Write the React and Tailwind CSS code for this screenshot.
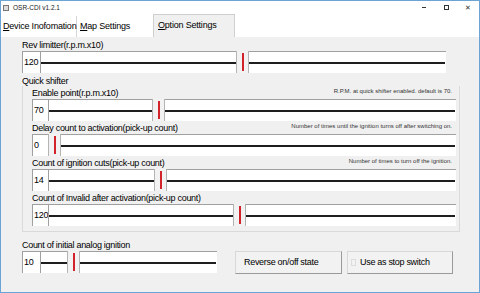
import React from 'react';

const font = { fontFamily: '"Liberation Sans", Arial, sans-serif' };

const Slider = ({ value, numW, offset, width }) => (
  <div className={`flex h-[22px] ${width}`}>
    <div
      className={`${numW} shrink-0 bg-white border-t border-l border-[#a0a0a0] flex items-center pl-[1px] text-[9px] tracking-[-0.3px] text-black whitespace-nowrap overflow-hidden`}
    >
      {value}
    </div>
    <div className="relative flex-1 bg-white border-t border-l border-[#a0a0a0] flex items-center">
      <div className="h-[2px] w-full mr-[1px] bg-[#1e1e1e]" />
      <div
        className="absolute top-[-1px] bottom-0 w-[13px] bg-[#f2f2f2] border-l border-r border-[#b4b4b4] flex justify-center items-center"
        style={{ left: offset }}
      >
        <div className="w-[2px] h-[18px] bg-[#d2232a]" />
      </div>
    </div>
  </div>
);

const Label = ({ children, note }) => (
  <div className="flex h-[13px] items-start justify-between pr-[4px] whitespace-nowrap">
    <span className="text-[9px] tracking-[-0.3px] leading-[13px] pt-[1px] text-black">{children}</span>
    {note && <span className="text-[6px] leading-[10px] text-[#333]">{note}</span>}
  </div>
);

const btn =
  'h-[23px] bg-[#f2f2f2] border-t border-l border-[#d8d8d8] border-r border-b border-r-[#9a9a9a] border-b-[#9a9a9a] text-[9px] tracking-[-0.3px] text-left text-black whitespace-nowrap flex items-center';

const App = () => {
  return (
    <div
      className="w-[480px] h-[293px] bg-white border border-[#6aa5d5] flex flex-col overflow-hidden"
      style={font}
    >
      {/* title bar */}
      <div className="h-[13px] flex items-center shrink-0">
        <div className="ml-[2px] w-[6px] h-[6px] border border-[#777] bg-[#ddd]" />
        <span className="ml-[4px] text-[6.5px] text-[#222]">OSR-CDI v1.2.1</span>
        <div className="ml-auto flex items-center h-full">
          <div className="w-[22px] flex justify-center">
            <div className="w-[4px] h-px bg-[#333]" />
          </div>
          <div className="w-[22px] flex justify-center">
            <div className="w-[5px] h-[5px] border border-[#333]" />
          </div>
          <div className="w-[22px] flex justify-center text-[7px] leading-none text-[#333]">✕</div>
        </div>
      </div>

      {/* tabs */}
      <div className="h-[23px] flex items-stretch shrink-0 text-[9px] tracking-[-0.2px] text-black whitespace-nowrap">
        <div className="flex items-center pl-[2px] w-[76px] mt-[2px] border-r border-[#d5d5d5]">
          <span>
            <u>D</u>evice Inofomation
          </span>
        </div>
        <div className="flex items-center pl-[3px] w-[76px] mt-[2px]">
          <span>
            <u>M</u>ap Settings
          </span>
        </div>
        <div className="flex items-center pl-[4px] w-[82px] bg-[#f0f0f0] border border-b-0 border-[#cfcfcf]">
          <span>
            <u>O</u>ption Settings
          </span>
        </div>
      </div>

      {/* content */}
      <div className="flex-1 bg-[#f0f0f0] pl-[21px] pt-px flex flex-col">
        <Label>Rev limitter(r.p.m.x10)</Label>
        <Slider value="120" numW="w-[18px]" offset={195} width="w-[424px]" />

        <div className="mt-[2px] h-[12px] text-[9px] tracking-[-0.3px] leading-[12px] text-black">Quick shifter</div>

        <div className="w-[438px] mt-[-1px] border-l border-b border-r border-[#dadada] bg-[#f0f0f0] pl-[9px] pr-[3px] pb-[5px]">
          <Label note="R.P.M. at quick shifter enabled. default is 70.">Enable point(r.p.m.x10)</Label>
          <Slider value="70" numW="w-[16px]" offset={103} width="w-full" />
          <Label note="Number of times until the ignition turns off after switching on.">
            Delay count  to activation(pick-up count)
          </Label>
          <Slider value="0" numW="w-[16px]" offset={-1} width="w-full" />
          <Label note="Number of times to turn off the ignition.">Count of ignition cuts(pick-up count)</Label>
          <Slider value="14" numW="w-[16px]" offset={105} width="w-full" />
          <Label>Count of Invalid after activation(pick-up count)</Label>
          <Slider value="120" numW="w-[16px]" offset={184} width="w-full" />
        </div>

        <div className="mt-[6px]">
          <Label>Count of initial analog ignition</Label>
        </div>
        <div className="flex items-start">
          <Slider value="10" numW="w-[18px]" offset={26} width="w-[195px]" />
          <button className={`${btn} ml-[18px] w-[107px] pl-[8px]`}>Reverse on/off state</button>
          <button className={`${btn} ml-[5px] w-[106px] pl-[3px]`}>
            <span className="w-[5px] h-[7px] border border-[#dcdcdc] mr-[4px]" />
            Use as stop switch
          </button>
        </div>
      </div>
    </div>
  );
};

export default App;
